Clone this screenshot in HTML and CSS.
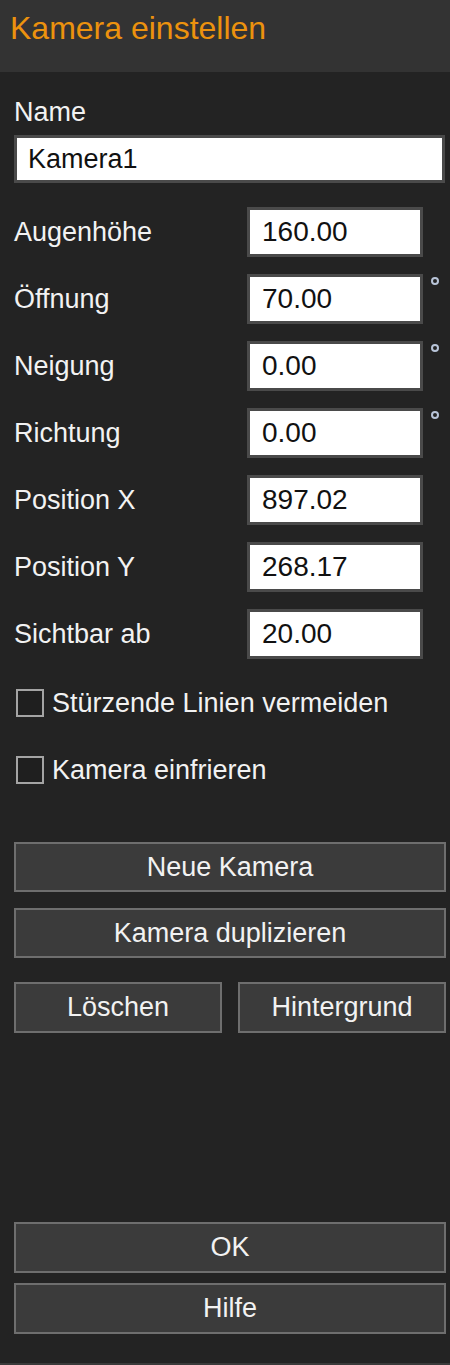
FILE: index.html
```html
<!DOCTYPE html>
<html lang="de">
<head>
<meta charset="utf-8">
<title>Kamera einstellen</title>
<link rel="stylesheet" href="styles.css">
</head>
<body>
<div class="panel">
  <header class="header"><h1 class="title">Kamera einstellen</h1></header>
  <main class="content">
    <label class="name-label">Name</label>
    <div class="input name-input">Kamera1</div>

    <div class="fields">
      <div class="row"><span class="label">Augenhöhe</span><div class="input num">160.00</div><span class="unit"></span></div>
      <div class="row"><span class="label">Öffnung</span><div class="input num">70.00</div><span class="unit"><i class="deg"></i></span></div>
      <div class="row"><span class="label">Neigung</span><div class="input num">0.00</div><span class="unit"><i class="deg"></i></span></div>
      <div class="row"><span class="label">Richtung</span><div class="input num">0.00</div><span class="unit"><i class="deg"></i></span></div>
      <div class="row"><span class="label">Position X</span><div class="input num">897.02</div><span class="unit"></span></div>
      <div class="row"><span class="label">Position Y</span><div class="input num">268.17</div><span class="unit"></span></div>
      <div class="row"><span class="label">Sichtbar ab</span><div class="input num">20.00</div><span class="unit"></span></div>
    </div>

    <div class="checks">
      <div class="check"><span class="box"></span><span>Stürzende Linien vermeiden</span></div>
      <div class="check"><span class="box"></span><span>Kamera einfrieren</span></div>
    </div>

    <div class="actions">
      <div class="btn">Neue Kamera</div>
      <div class="btn">Kamera duplizieren</div>
      <div class="btn-pair">
        <div class="btn">Löschen</div>
        <div class="btn">Hintergrund</div>
      </div>
    </div>

    <div class="footer">
      <div class="btn">OK</div>
      <div class="btn">Hilfe</div>
    </div>
  </main>
</div>
</body>
</html>
```

FILE: styles.css
```css
* { box-sizing: border-box; }
html, body { margin: 0; padding: 0; }
body {
  background: #232323;
  font-family: "Liberation Sans", Arial, sans-serif;
  color: #f2f2f2;
}
.panel {
  width: 450px;
  height: 1365px;
  background: #232323;
  border-bottom: 2px solid #3a3a3a;
  display: flex;
  flex-direction: column;
}
.header {
  height: 72px;
  background: #333333;
  padding: 9px 0 0 10px;
}
.title {
  margin: 0;
  font-weight: normal;
  font-size: 32px;
  line-height: 38px;
  color: #ec920e;
}
.content {
  display: flex;
  flex-direction: column;
  padding: 0 4px 0 14px;
}
.name-label {
  margin-top: 25px;
  font-size: 27px;
  line-height: 30px;
}
.input {
  background: #ffffff;
  border: 3px solid #4a4a4a;
  color: #111111;
  font-size: 27px;
  line-height: 30px;
  display: flex;
  align-items: center;
}
.name-input {
  margin-top: 8px;
  margin-right: 1px;
  height: 48px;
  padding-left: 11px;
}
.fields {
  margin-top: 24px;
  display: flex;
  flex-direction: column;
  gap: 17px;
}
.row {
  display: grid;
  grid-template-columns: 233px 176px 1fr;
  align-items: center;
  height: 50px;
  font-size: 27px;
}
.row .input {
  height: 50px;
  padding-left: 12px;
  font-size: 28px;
}
.unit {
  align-self: start;
  height: 100%;
  position: relative;
}
.deg {
  position: absolute;
  left: 8px;
  top: 3px;
  width: 8px;
  height: 8px;
  border-radius: 50%;
  border: 2px solid #b8c4d8;
}
.checks {
  margin-top: 27px;
  display: flex;
  flex-direction: column;
  gap: 33px;
}
.check {
  height: 34px;
  display: flex;
  align-items: center;
  font-size: 27px;
  padding-left: 2px;
}
.box {
  width: 28px;
  height: 28px;
  border: 2px solid #a4a4a4;
  background: #1f1f1f;
  margin-right: 8px;
  flex: none;
}
.actions {
  margin-top: 55px;
  display: flex;
  flex-direction: column;
  gap: 16px;
}
.btn {
  height: 50px;
  background: #3b3b3b;
  border: 2px solid #6e6e6e;
  display: flex;
  align-items: center;
  justify-content: center;
  font-size: 27px;
  color: #f2f2f2;
}
.btn-pair {
  margin-top: 8px;
  display: grid;
  grid-template-columns: 1fr 1fr;
  gap: 16px;
}
.btn-pair .btn { height: 51px; }
.footer {
  margin-top: 189px;
  display: flex;
  flex-direction: column;
  gap: 10px;
}
.footer .btn { height: 51px; }
```
